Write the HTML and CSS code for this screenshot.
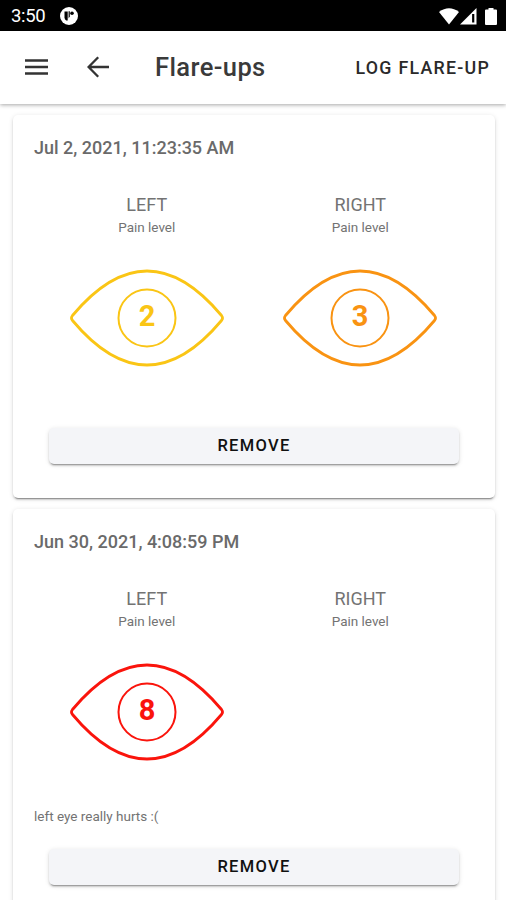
FILE: index.html
```
<!DOCTYPE html>
<html lang="en">
<head>
  <meta charset="UTF-8">
  <meta name="viewport" content="width=device-width, initial-scale=1">
  <title>Flare-ups</title>
  <link rel="stylesheet" href="styles.css">
</head>
<body>

<div class="status-bar">
  <span class="clock">3:50</span>
  <svg class="app-icon" width="18" height="18" viewBox="0 0 18 18">
    <circle cx="9" cy="9" r="9" fill="#fff"/>
    <path d="M4.500 4.500h3.200v9H6.200q-1.700-1-1.700-3z" fill="#000"/>
    <path d="M8.600 4.200h1.200v5.300l-1.200 2z" fill="#000"/>
    <circle cx="12" cy="6.200" r="1.800" fill="#000"/>
  </svg>
  <div class="status-icons">
    <svg width="20" height="17" viewBox="0 0 20 17"><path d="M0 4Q10-3.500 20 4L10 16.500z" fill="#fff"/></svg>
    <svg width="17" height="17" viewBox="0 0 17 17"><path d="M16.500 0v16.500H0z" fill="#fff"/><path d="M13.200 6v8.500" stroke="#000" stroke-width="2.200"/></svg>
    <svg class="battery" width="12" height="17" viewBox="0 0 12 17"><path d="M3.500 0h5v1.600H11q1 0 1 1V16q0 1-1 1H1q-1 0-1-1V2.600q0-1 1-1h2.500z" fill="#fff"/></svg>
  </div>
</div>

<header class="toolbar">
  <button class="icon-btn menu-btn" aria-label="Menu">
    <svg width="23" height="18" viewBox="0 0 23 18"><path d="M0 2.500h23M0 9h23M0 15.500h23" stroke="#333" stroke-width="2.300"/></svg>
  </button>
  <button class="icon-btn back-btn" aria-label="Back">
    <svg width="22" height="22" viewBox="0 0 22 22"><path d="M22 11H1.800M11.200 1.200L1.600 11l9.600 9.800" fill="none" stroke="#333" stroke-width="2.300"/></svg>
  </button>
  <h1>Flare-ups</h1>
  <button class="log-btn">LOG FLARE-UP</button>
</header>

<main>
  <section class="card">
    <h2>Jul 2, 2021, 11:23:35 AM</h2>
    <div class="eyes">
      <div class="eye">
        <h3>LEFT</h3>
        <p>Pain level</p>
        <svg class="level-2" width="156" height="100" viewBox="0 0 156 100">
          <path d="M3.500 47.500Q78-41.500 152.500 47.500Q154.500 50 152.500 52.500Q78 141.500 3.500 52.500Q1.500 50 3.500 47.500z"/>
          <circle cx="78" cy="50" r="28.500"/>
          <text x="78" y="58">2</text>
        </svg>
      </div>
      <div class="eye">
        <h3>RIGHT</h3>
        <p>Pain level</p>
        <svg class="level-3" width="156" height="100" viewBox="0 0 156 100">
          <path d="M3.500 47.500Q78-41.500 152.500 47.500Q154.500 50 152.500 52.500Q78 141.500 3.500 52.500Q1.500 50 3.500 47.500z"/>
          <circle cx="78" cy="50" r="28.500"/>
          <text x="78" y="58">3</text>
        </svg>
      </div>
    </div>
    <button class="remove-btn">REMOVE</button>
  </section>

  <section class="card">
    <h2>Jun 30, 2021, 4:08:59 PM</h2>
    <div class="eyes">
      <div class="eye">
        <h3>LEFT</h3>
        <p>Pain level</p>
        <svg class="level-8" width="156" height="100" viewBox="0 0 156 100">
          <path d="M3.500 47.500Q78-41.500 152.500 47.500Q154.500 50 152.500 52.500Q78 141.500 3.500 52.500Q1.500 50 3.500 47.500z"/>
          <circle cx="78" cy="50" r="28.500"/>
          <text x="78" y="58">8</text>
        </svg>
      </div>
      <div class="eye">
        <h3>RIGHT</h3>
        <p>Pain level</p>
      </div>
    </div>
    <p class="note">left eye really hurts :(</p>
    <button class="remove-btn">REMOVE</button>
  </section>
</main>

</body>
</html>
```
FILE: styles.css
```
* {
  box-sizing: border-box;
}
body {
  margin: 0;
  height: 900px;
  overflow: hidden;
  background: #fff;
  font-family: Roboto, sans-serif;
}
h1, h2, h3, p {
  margin: 0;
}
button {
  border: none;
  padding: 0;
  background: none;
  font-family: inherit;
}
svg {
  display: block;
}
.status-bar {
  display: flex;
  align-items: center;
  height: 31px;
  padding: 1px 9px 0 11px;
  background: #000;
  color: #fff;
}
.clock {
  width: 49px;
  font-size: 18.5px;
  letter-spacing: -0.3px;
}
.status-icons {
  display: flex;
  margin-left: auto;
  gap: 1px;
}
.battery {
  margin-left: 7px;
}
.toolbar {
  display: flex;
  align-items: center;
  height: 73px;
  padding: 0 17px 1px 25px;
  background: #fff;
  box-shadow: 0 1px 4px rgba(0, 0, 0, 0.35);
}
.back-btn {
  margin-left: 39px;
}
.toolbar h1 {
  margin-left: 46px;
  font-size: 25.5px;
  font-weight: 500;
  letter-spacing: 0.4px;
  color: #3a3a3a;
}
.log-btn {
  margin-left: auto;
  margin-right: -1px;
  font-size: 17.8px;
  font-weight: 500;
  letter-spacing: 1.25px;
  color: #2a2a2a;
}
main {
  padding: 11px 11px 0 13px;
}
.card {
  height: 383px;
  margin-bottom: 11px;
  padding: 22px 21px 0;
  border-radius: 5px;
  background: #fff;
  box-shadow: 0 3px 1px -2px rgba(0, 0, 0, 0.3), 0 2px 2px 0 rgba(0, 0, 0, 0.14), 0 1px 5px 0 rgba(0, 0, 0, 0.12);
}
.card + .card {
  height: 420px;
}
.card h2 {
  height: 22px;
  font-size: 18px;
  line-height: 22px;
  font-weight: 500;
  color: #6a6a6a;
}
.eyes {
  display: grid;
  grid-template-columns: 1fr 1fr;
  height: 234px;
  margin: 35px 7px 0 6px;
}
.eye {
  display: flex;
  flex-direction: column;
  align-items: center;
}
.eye h3 {
  font-size: 18px;
  line-height: 22px;
  font-weight: 400;
  color: #737373;
}
.eye p {
  margin-top: 2px;
  font-size: 13.5px;
  line-height: 18px;
  color: #737373;
}
.eye svg {
  margin-top: 31.5px;
  fill: none;
  stroke-width: 2.8;
}
.eye circle {
  stroke-width: 2;
}
.eye text {
  stroke: none;
  font-size: 29px;
  font-weight: 700;
  text-anchor: middle;
}
.level-2 {
  stroke: #fac515;
}
.level-2 text {
  fill: #fac515;
}
.level-3 {
  stroke: #f99312;
}
.level-3 text {
  fill: #f99312;
}
.level-8 {
  stroke: #fa140c;
}
.level-8 text {
  fill: #fa140c;
}
.note {
  height: 42px;
  margin-top: -15px;
  font-size: 13.5px;
  line-height: 18px;
  color: #737373;
}
.remove-btn {
  display: block;
  width: 410px;
  height: 36px;
  margin-left: 15px;
  padding-bottom: 1px;
  border-radius: 5px;
  background: #f4f5f8;
  color: #111;
  font-size: 16.5px;
  font-weight: 500;
  letter-spacing: 1.3px;
  box-shadow: 0 3px 1px -2px rgba(0, 0, 0, 0.25), 0 2px 2px 0 rgba(0, 0, 0, 0.14), 0 1px 5px 0 rgba(0, 0, 0, 0.12);
}
```
